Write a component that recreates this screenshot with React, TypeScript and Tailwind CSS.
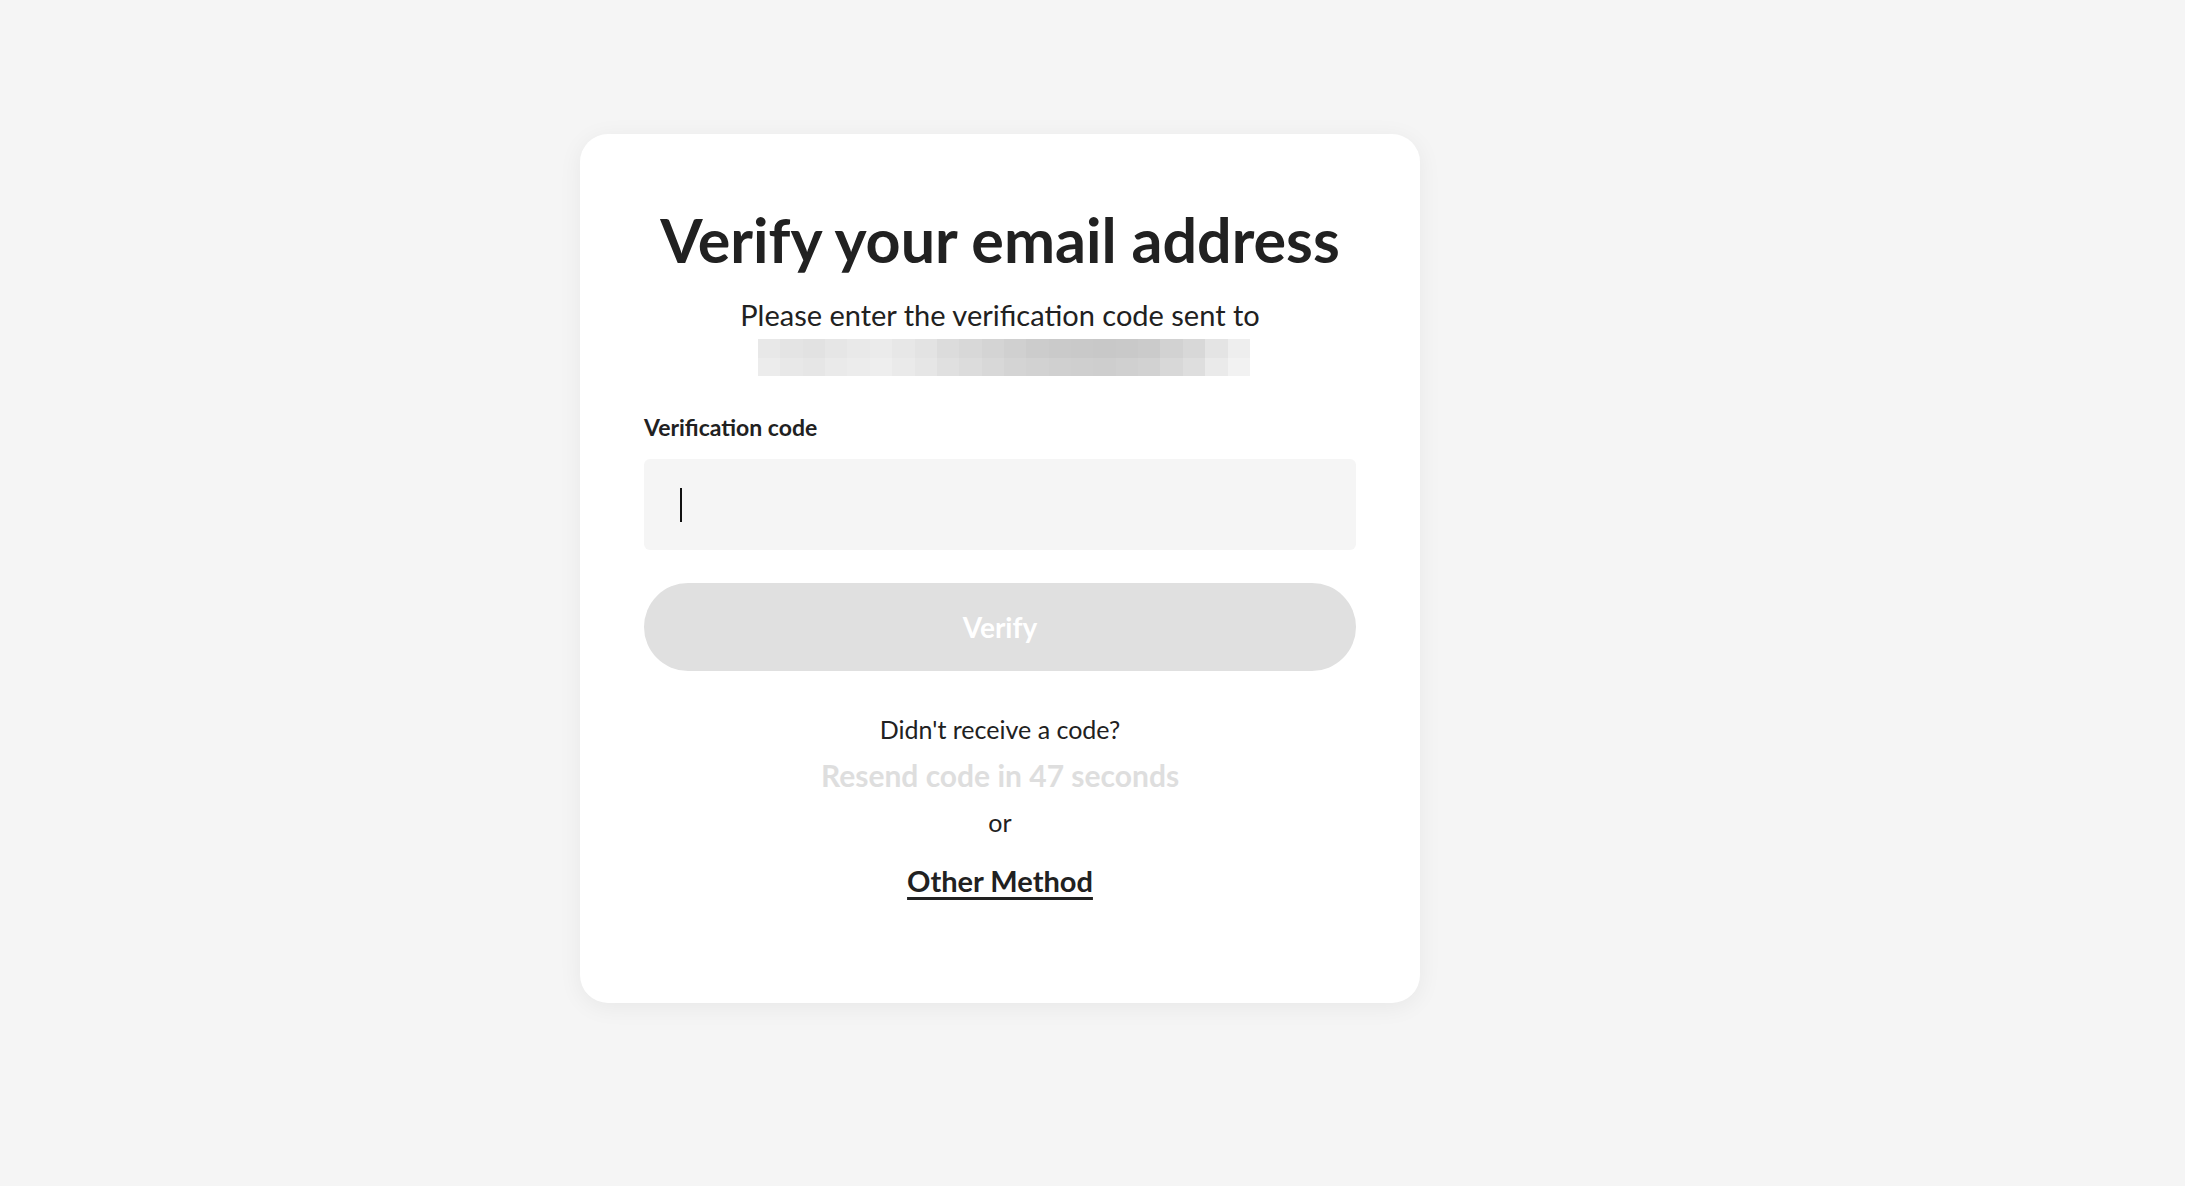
import React from "react";

const topRow = [
  "bg-[#e8e8e8]", "bg-[#e4e4e4]", "bg-[#e2e2e2]", "bg-[#e6e6e6]", "bg-[#e9e9e9]", "bg-[#ebebeb]",
  "bg-[#e7e7e7]", "bg-[#e3e3e3]", "bg-[#dcdcdc]", "bg-[#d8d8d8]", "bg-[#d4d4d4]", "bg-[#d0d0d0]",
  "bg-[#cccccc]", "bg-[#cacaca]", "bg-[#c9c9c9]", "bg-[#c8c8c8]", "bg-[#c9c9c9]", "bg-[#cbcbcb]",
  "bg-[#d2d2d2]", "bg-[#d8d8d8]", "bg-[#e4e4e4]", "bg-[#eeeeee]",
];
const bottomRow = [
  "bg-[#ececec]", "bg-[#e8e8e8]", "bg-[#e6e6e6]", "bg-[#eaeaea]", "bg-[#ececec]", "bg-[#eeeeee]",
  "bg-[#eaeaea]", "bg-[#e6e6e6]", "bg-[#e0e0e0]", "bg-[#dcdcdc]", "bg-[#d8d8d8]", "bg-[#d4d4d4]",
  "bg-[#d2d2d2]", "bg-[#d0d0d0]", "bg-[#cfcfcf]", "bg-[#cecece]", "bg-[#d0d0d0]", "bg-[#d2d2d2]",
  "bg-[#d8d8d8]", "bg-[#dedede]", "bg-[#eaeaea]", "bg-[#f2f2f2]",
];

export default function App() {
  return (
    <div
      className="min-h-screen w-full bg-[#f5f5f5] flex justify-start pl-[580px] pt-[134px] text-[#212121]"
      style={{ fontFamily: "Lato, 'Noto Sans', sans-serif" }}
    >
      <div className="w-[840px] h-[869px] bg-white rounded-[28px] shadow-[0_4px_24px_rgba(0,0,0,0.06)] px-[64px] pt-[70px] flex flex-col items-center">
        <h1 className="text-[61px] leading-[72px] font-bold">Verify your email address</h1>
        <p className="mt-[21px] text-[29px] leading-[36px]">Please enter the verification code sent to</p>
        <div className="mt-[6px] ml-[8px] w-[492px] h-[37px] flex flex-col">
          <div className="flex flex-1">
            {topRow.map((c, i) => (
              <div key={i} className={`flex-1 ${c}`} />
            ))}
          </div>
          <div className="flex flex-1">
            {bottomRow.map((c, i) => (
              <div key={i} className={`flex-1 ${c}`} />
            ))}
          </div>
        </div>
        <div className="w-full mt-[37px] text-[23px] leading-[28px] font-bold">Verification code</div>
        <div className="w-full mt-[18px] h-[91px] bg-[#f5f5f5] rounded-[6px] flex items-center pl-[36px]">
          <div className="w-[2px] h-[34px] bg-[#111]" />
        </div>
        <button className="w-full mt-[33px] h-[88px] rounded-full bg-[#e0e0e0] text-white text-[28px] font-bold">
          Verify
        </button>
        <p className="mt-[42px] text-[25px] leading-[32px]">Didn't receive a code?</p>
        <p className="mt-[12px] text-[30px] leading-[36px] font-bold text-[#dedede]">Resend code in 47 seconds</p>
        <p className="mt-[13px] text-[25px] leading-[32px]">or</p>
        <a className="mt-[25px] text-[29px] leading-[36px] font-bold underline underline-offset-[5px] decoration-[3px] cursor-pointer">
          Other Method
        </a>
      </div>
    </div>
  );
}
